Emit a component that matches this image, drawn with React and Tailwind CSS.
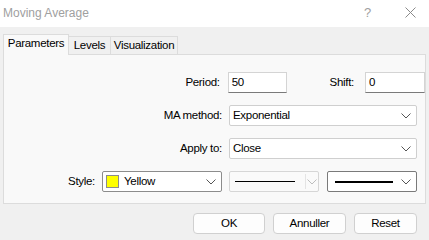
import React from 'react';

const Chevron = ({ color = '#555' }) => (
  <svg width="10" height="6" viewBox="0 0 10 6" className="shrink-0">
    <path d="M0.5 0.5 L5 5 L9.5 0.5" fill="none" stroke={color} strokeWidth="1" />
  </svg>
);

function Combo({ width, children, border = 'border-[#cfcfcf]', chevron = '#555', bg = 'bg-white' }) {
  return (
    <div className={`h-[21px] ${width} ${bg} border ${border} rounded-[2px] flex items-center pl-[3px] pr-[5px]`}>
      <div className="flex-1 flex items-center min-w-0">{children}</div>
      <Chevron color={chevron} />
    </div>
  );
}

function TextBox({ width, value }) {
  return (
    <div className={`h-[21px] ${width} bg-white border border-[#d4d4d4] border-b-[#7a7a7a] flex items-center pl-[3px]`}>
      {value}
    </div>
  );
}

function Button({ children, width }) {
  return (
    <div className={`h-[21px] ${width} bg-[#fdfdfd] border border-[#d0d0d0] rounded-[4px] flex items-center justify-center`}>
      {children}
    </div>
  );
}

export default function App() {
  return (
    <div
      className="w-[429px] h-[240px] bg-[#f0f0f0] flex flex-col text-[11.5px] text-black tracking-[-0.3px]"
      style={{ fontFamily: '"Liberation Sans", Arial, sans-serif' }}
    >
      {/* Title bar */}
      <div className="h-[27px] bg-white flex items-center pl-[3px] pb-[2px] text-[12px] text-[#a0a0a0] tracking-normal">
        <span className="flex-1">Moving Average</span>
        <span className="text-[13px] w-[10px] mr-[31px]">?</span>
        <svg width="11" height="11" viewBox="0 0 11 11" className="mr-[13px]">
          <path d="M0.5 0.5 L10.5 10.5 M10.5 0.5 L0.5 10.5" stroke="#8a8a8a" strokeWidth="1" />
        </svg>
      </div>

      {/* Tabs */}
      <div className="flex items-end px-[3px] h-[28px] -mb-px relative z-10">
        <div className="h-[21px] w-[66px] bg-[#f9f9f9] border border-[#dcdcdc] border-b-0 flex items-center justify-center pb-[3px]">
          Parameters
        </div>
        <div className="h-[19px] w-[42px] bg-[#f0f0f0] border border-[#dcdcdc] border-l-0 flex items-center justify-center">
          Levels
        </div>
        <div className="h-[19px] w-[67px] bg-[#f0f0f0] border border-[#dcdcdc] border-l-0 flex items-center justify-center">
          Visualization
        </div>
      </div>

      {/* Panel */}
      <div className="mx-[3px] h-[150px] bg-[#f9f9f9] border border-[#dcdcdc] flex flex-col pt-[17px] gap-[12px]">
        <div className="flex items-center">
          <div className="w-[218px] text-right">Period:</div>
          <div className="ml-[8px]"><TextBox width="w-[59px]" value="50" /></div>
          <div className="w-[68px] text-right">Shift:</div>
          <div className="ml-[11px]"><TextBox width="w-[60px]" value="0" /></div>
        </div>
        <div className="flex items-center">
          <div className="w-[218px] text-right">MA method:</div>
          <div className="ml-[7px]"><Combo width="w-[188px]">Exponential</Combo></div>
        </div>
        <div className="flex items-center">
          <div className="w-[218px] text-right">Apply to:</div>
          <div className="ml-[7px]"><Combo width="w-[188px]">Close</Combo></div>
        </div>
        <div className="flex items-center">
          <div className="w-[91px] text-right">Style:</div>
          <div className="ml-[7px]">
            <Combo width="w-[120px]" border="border-[#8c8c8c]">
              <span className="w-[13px] h-[13px] bg-[#ffff00] border border-[#8c8c8c] mr-[5px]" />
              Yellow
            </Combo>
          </div>
          <div className="ml-[7px]">
            <div className="h-[21px] w-[90px] bg-[#fafafa] border border-[#d6d6d6] rounded-[2px] flex items-center">
              <div className="w-[60px] ml-[5px] h-px bg-black" />
              <div className="w-px h-[15px] bg-[#e4e4e4] ml-[10px]" />
              <div className="flex-1 flex justify-center"><Chevron color="#bdbdbd" /></div>
            </div>
          </div>
          <div className="ml-[8px]">
            <div className="h-[21px] w-[90px] bg-white border border-[#7a7a7a] rounded-[2px] flex items-center pr-[5px]">
              <div className="w-[58px] ml-[7px] h-[2px] bg-black" />
              <div className="flex-1" />
              <Chevron />
            </div>
          </div>
        </div>
      </div>

      {/* Buttons */}
      <div className="flex justify-end gap-[8px] pr-[12px] mt-[9px]">
        <Button width="w-[72px]">OK</Button>
        <Button width="w-[73px]">Annuller</Button>
        <Button width="w-[63px]">Reset</Button>
      </div>
    </div>
  );
}
